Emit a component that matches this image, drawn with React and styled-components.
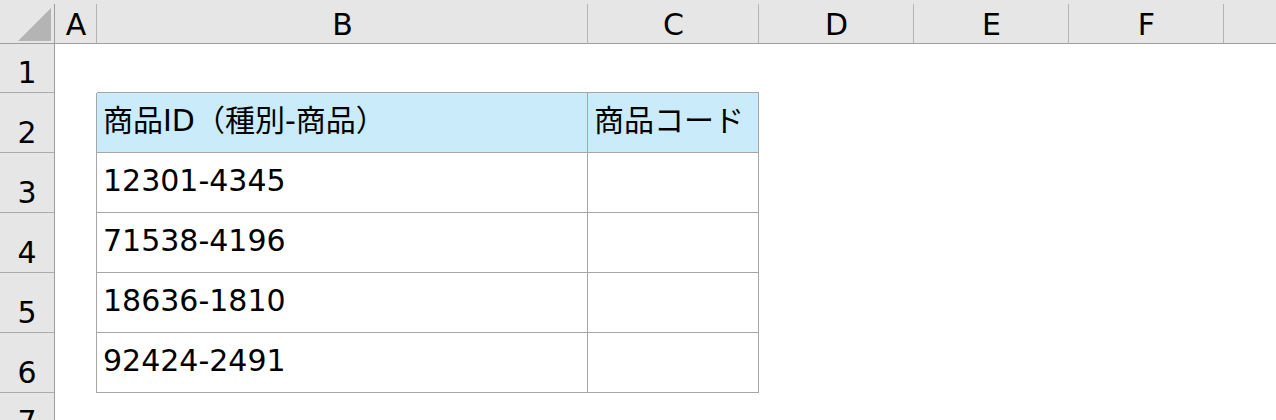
import React from 'react';
import styled, { createGlobalStyle } from 'styled-components';

const Global = createGlobalStyle`
  html, body { margin: 0; padding: 0; background: #ffffff; }
  body {
    font-family: "DejaVu Sans", "Noto Sans CJK JP", sans-serif;
    overflow: hidden;
  }
`;

const Sheet = styled.div`
  display: grid;
  grid-template-columns: 55px 42px 491px 171px 155px 155px 155px 1fr;
  grid-template-rows: 44px 49px repeat(5, 60px) 49px;
  width: 1276px;
  height: 420px;
  overflow: hidden;
  font-size: 30px;
  line-height: 36px;
  color: #000;
`;

const Corner = styled.div`
  position: relative;
  background: #e6e6e6;
  border-bottom: 1px solid #9e9e9e;
  &::after {
    content: '';
    position: absolute;
    right: 0;
    top: 4px;
    bottom: 0;
    width: 1px;
    background: #9e9e9e;
  }
  svg { position: absolute; left: 18px; top: 8px; }
`;

const ColHead = styled.div`
  position: relative;
  background: #e6e6e6;
  border-bottom: 1px solid #9e9e9e;
  display: flex;
  justify-content: center;
  align-items: center;
  padding-top: 6px;
  &::after {
    content: '';
    position: absolute;
    right: 0;
    top: 4px;
    bottom: 0;
    width: ${(p) => (p.$last ? '0' : '1px')};
    background: #b4b4b4;
  }
`;

const RowHead = styled.div`
  background: #e6e6e6;
  border-right: 1px solid #9e9e9e;
  border-bottom: 1px solid #ababab;
  display: flex;
  justify-content: center;
  align-items: flex-end;
  padding-bottom: 1px;
`;

const Cell = styled.div`
  background: ${(p) => (p.$fill ? '#c9ebfa' : '#ffffff')};
  border-right: ${(p) => (p.$r ? '1px solid #a6a6a6' : '0')};
  border-bottom: ${(p) => (p.$b ? '1px solid #a6a6a6' : '0')};
  display: flex;
  align-items: center;
  padding: 0 0 4px 6px;
  white-space: nowrap;
  overflow: hidden;
`;

const columns = ['A', 'B', 'C', 'D', 'E', 'F', ''];

const rows = [
  { n: 1, b: '', c: '', table: false, top: true },
  { n: 2, b: '商品ID（種別-商品）', c: '商品コード', table: true, head: true },
  { n: 3, b: '12301-4345', c: '', table: true },
  { n: 4, b: '71538-4196', c: '', table: true },
  { n: 5, b: '18636-1810', c: '', table: true },
  { n: 6, b: '92424-2491', c: '', table: true },
  { n: 7, b: '', c: '', table: false },
];

export default function App() {
  return (
    <>
      <Global />
      <Sheet>
        <Corner>
          <svg width="34" height="34" viewBox="0 0 34 34">
            <polygon points="0,33 33,33 33,0" fill="#b4b4b4" />
          </svg>
        </Corner>
        {columns.map((c, i) => (
          <ColHead key={i} $last={i === columns.length - 1}>
            {c}
          </ColHead>
        ))}
        {rows.map((r) => (
          <React.Fragment key={r.n}>
            <RowHead>{r.n}</RowHead>
            <Cell $r={r.table} />
            <Cell $r={r.table} $b={r.table || r.top} $fill={r.head}>
              {r.b}
            </Cell>
            <Cell $r={r.table} $b={r.table || r.top} $fill={r.head}>
              {r.c}
            </Cell>
            <Cell />
            <Cell />
            <Cell />
            <Cell />
          </React.Fragment>
        ))}
      </Sheet>
    </>
  );
}
